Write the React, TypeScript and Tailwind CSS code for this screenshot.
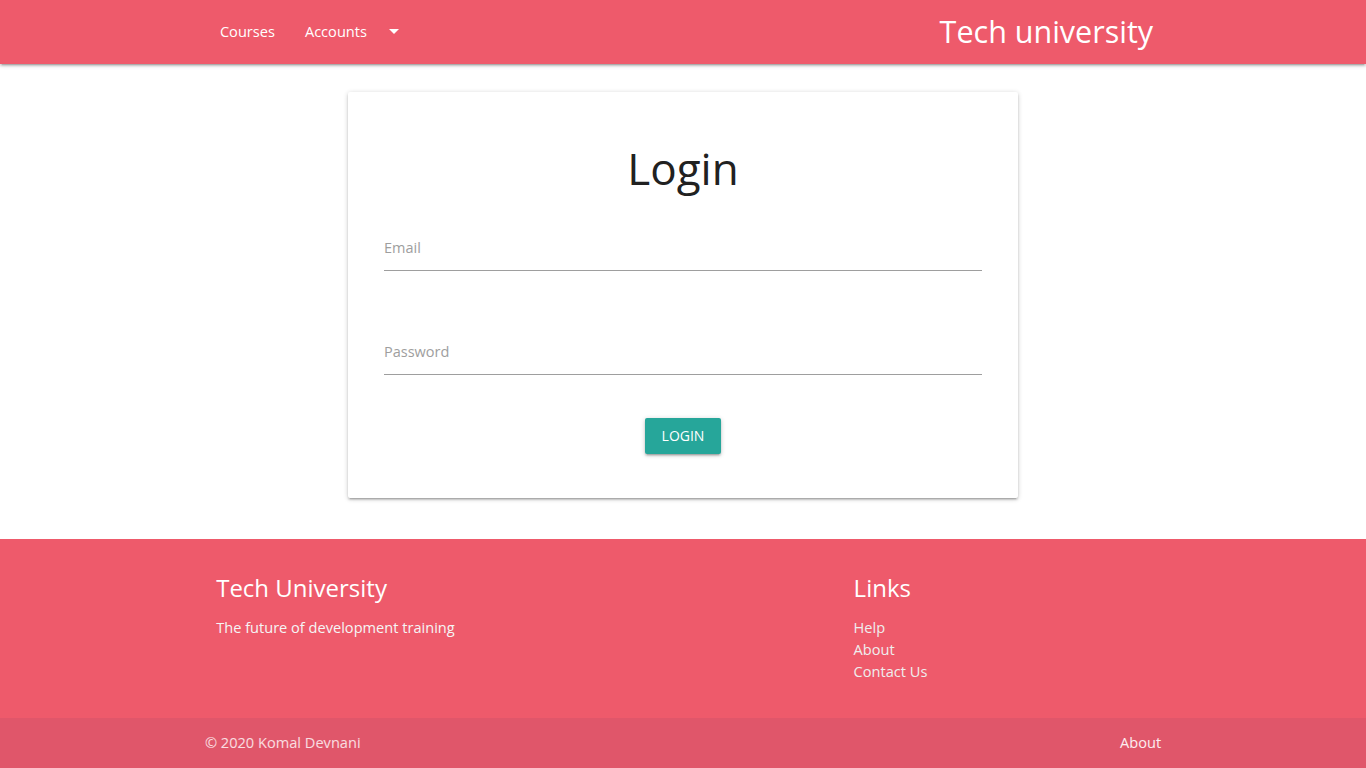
import React from "react";

const font = { fontFamily: '"Open Sans", "Noto Sans", sans-serif' };

export default function App() {
  return (
    <div className="min-h-screen bg-white" style={font}>
      {/* Navbar */}
      <nav className="h-16 bg-[#ee5a6b] text-white shadow-[0_2px_2px_0_rgba(0,0,0,0.14),0_3px_1px_-2px_rgba(0,0,0,0.12),0_1px_5px_0_rgba(0,0,0,0.2)] relative z-10">
        <div className="w-[70%] mx-auto h-full pb-[2px] flex items-center justify-between">
          <ul className="flex items-center text-[14.6px]">
            <li>
              <a href="#" className="px-[15px] leading-[60px] block">Courses</a>
            </li>
            <li>
              <a href="#" className="px-[15px] leading-[60px] flex items-center">
                Accounts
                <svg className="ml-[15px]" width="24" height="24" viewBox="0 0 24 24" fill="currentColor">
                  <path d="M7 10l5 5 5-5z" />
                </svg>
              </a>
            </li>
          </ul>
          <a href="#" className="pr-2 text-[30.5px] leading-[60px]">Tech university</a>
        </div>
      </nav>

      {/* Main */}
      <main className="pt-[28px] pb-[41px]">
        <div className="w-[670px] mx-auto bg-white rounded-[2px] px-[36px] pt-[52px] pb-[44px] shadow-[0_2px_2px_0_rgba(0,0,0,0.14),0_3px_1px_-2px_rgba(0,0,0,0.12),0_1px_5px_0_rgba(0,0,0,0.2)]">
          <h3 className="text-center text-[44px] leading-[48px] text-[#212121]">Login</h3>

          <div className="mt-[46px]">
            <label className="block text-[14.5px] leading-[20px] text-[#9e9e9e]">Email</label>
            <div className="mt-[12px] border-b border-[#9e9e9e]" />
          </div>

          <div className="mt-[71px]">
            <label className="block text-[14.5px] leading-[20px] text-[#9e9e9e]">Password</label>
            <div className="mt-[12px] border-b border-[#9e9e9e]" />
          </div>

          <div className="mt-[43px] flex justify-center">
            <button className="h-[36px] px-[17px] rounded-[2px] bg-[#26a69a] text-white text-[14px] leading-[34px] uppercase shadow-[0_2px_2px_0_rgba(0,0,0,0.14),0_3px_1px_-2px_rgba(0,0,0,0.12),0_1px_5px_0_rgba(0,0,0,0.2)]">
              Login
            </button>
          </div>
        </div>
      </main>

      {/* Footer */}
      <footer className="bg-[#ee5a6b] text-white">
        <div className="w-[70%] mx-auto grid grid-cols-12 pt-[34px] pb-[36px]">
          <div className="col-span-6 px-[11.25px]">
            <h5 className="text-[24px] leading-[30px]">Tech University</h5>
            <p className="mt-[13px] text-[14.6px] leading-[22px] text-[#f5f5f5]">The future of development training</p>
          </div>
          <div className="col-start-9 col-span-4 px-[11.25px]">
            <h5 className="text-[24px] leading-[30px]">Links</h5>
            <ul className="mt-[13px] text-[14.6px] leading-[22px] text-[#eeeeee]">
              <li><a href="#">Help</a></li>
              <li><a href="#">About</a></li>
              <li><a href="#">Contact Us</a></li>
            </ul>
          </div>
        </div>
        <div className="h-[50px] bg-[#e0566a] text-[14.6px] text-white/80">
          <div className="w-[70%] mx-auto h-full flex items-center justify-between">
            <span>© 2020 Komal Devnani</span>
            <a href="#" className="text-white/90">About</a>
          </div>
        </div>
      </footer>
    </div>
  );
}
